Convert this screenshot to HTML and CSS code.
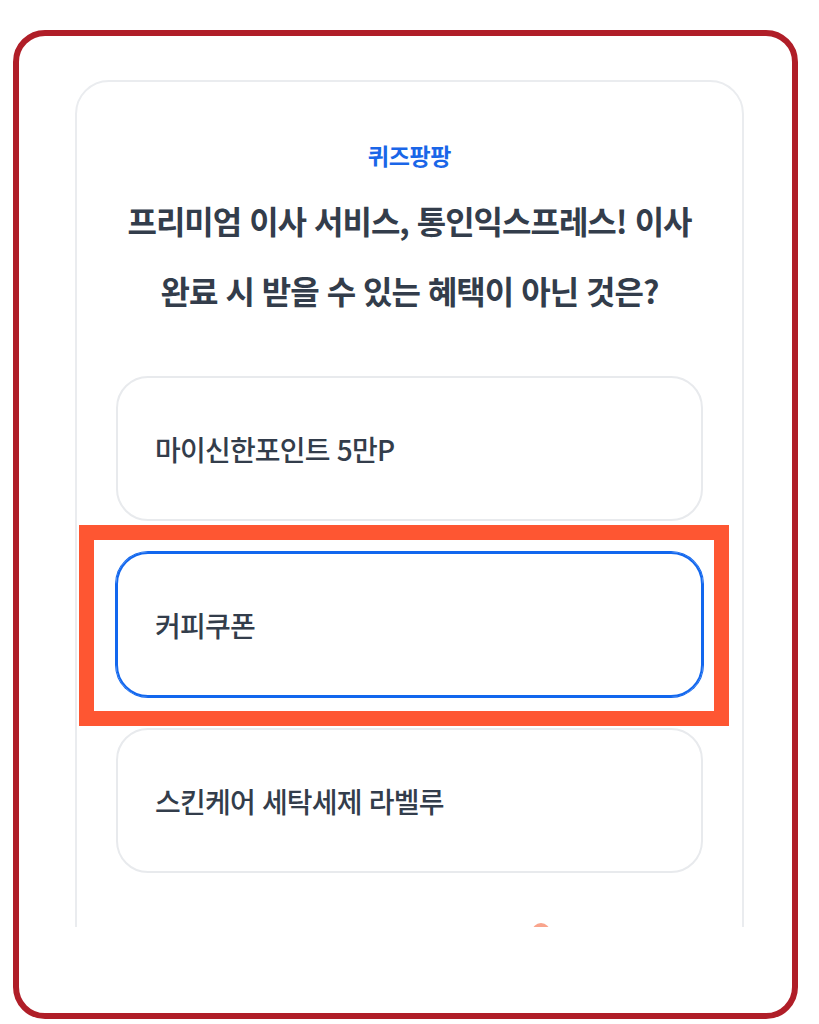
FILE: index.html
```html
<!DOCTYPE html>
<html lang="ko">
<head>
	<meta charset="utf-8">
	<title>퀴즈팡팡</title>
	<link rel="stylesheet" href="styles.css">
</head>
<body>
	<div class="frame">
		<div class="shot">
			<div class="quiz-card">
				<div class="quiz-label">퀴즈팡팡</div>
				<h1 class="quiz-title">프리미엄 이사 서비스, 통인익스프레스! 이사<br>완료 시 받을 수 있는 혜택이 아닌 것은?</h1>

				<div class="options">
					<div class="option">마이신한포인트 5만P</div>
					<div class="option selected">
						커피쿠폰
						<span class="highlight"></span>
					</div>
					<div class="option">스킨케어 세탁세제 라벨루</div>
				</div>

				<div class="mascot"></div>
			</div>
		</div>
	</div>
</body>
</html>
```

FILE: styles.css
```css
body {
	margin: 0;
	background: #fff;
	font-family: "Noto Sans CJK KR", "Noto Sans", sans-serif;
	color: #333d4b;
}

.frame {
	box-sizing: border-box;
	width: 785px;
	height: 989px;
	margin: 30px 0 0 13px;
	border: 6px solid #b01e28;
	border-radius: 32px;
}

/* cropped phone screenshot */
.shot {
	box-sizing: border-box;
	height: 891px;
	padding: 44px 0 0 56px;
	overflow: hidden;
}

.quiz-card {
	box-sizing: border-box;
	width: 669px;
	height: 1000px;
	padding: 58px 39px 0;
	border: 2px solid #eaecef;
	border-radius: 34px;
}

.quiz-label {
	text-align: center;
	font-size: 23px;
	line-height: 30px;
	font-weight: 700;
	letter-spacing: -0.3px;
	color: #1a66e8;
}

.quiz-title {
	margin: 15px 0 0;
	text-align: center;
	font-size: 32px;
	line-height: 70px;
	font-weight: 700;
	letter-spacing: -1px;
	color: #333d4b;
}

.options {
	display: flex;
	flex-direction: column;
	gap: 31px;
	margin-top: 51px;
}

.option {
	position: relative;
	box-sizing: border-box;
	height: 145px;
	display: flex;
	align-items: center;
	padding-left: 37px;
	border: 2px solid #e8eaed;
	border-radius: 32px;
	font-size: 28px;
	font-weight: 500;
	letter-spacing: -0.8px;
	color: #333d4b;
}

.option.selected {
	border-color: #1267ee;
	box-shadow: 0 0 0 1px #1267ee;
}

.highlight {
	position: absolute;
	left: -39px;
	top: -29px;
	right: -28px;
	bottom: -31px;
	border: 15px solid #fe5632;
}

.mascot {
	width: 18px;
	height: 18px;
	margin: 50px 0 0 416px;
	border-radius: 50%;
	background: #f9a48c;
}
```
